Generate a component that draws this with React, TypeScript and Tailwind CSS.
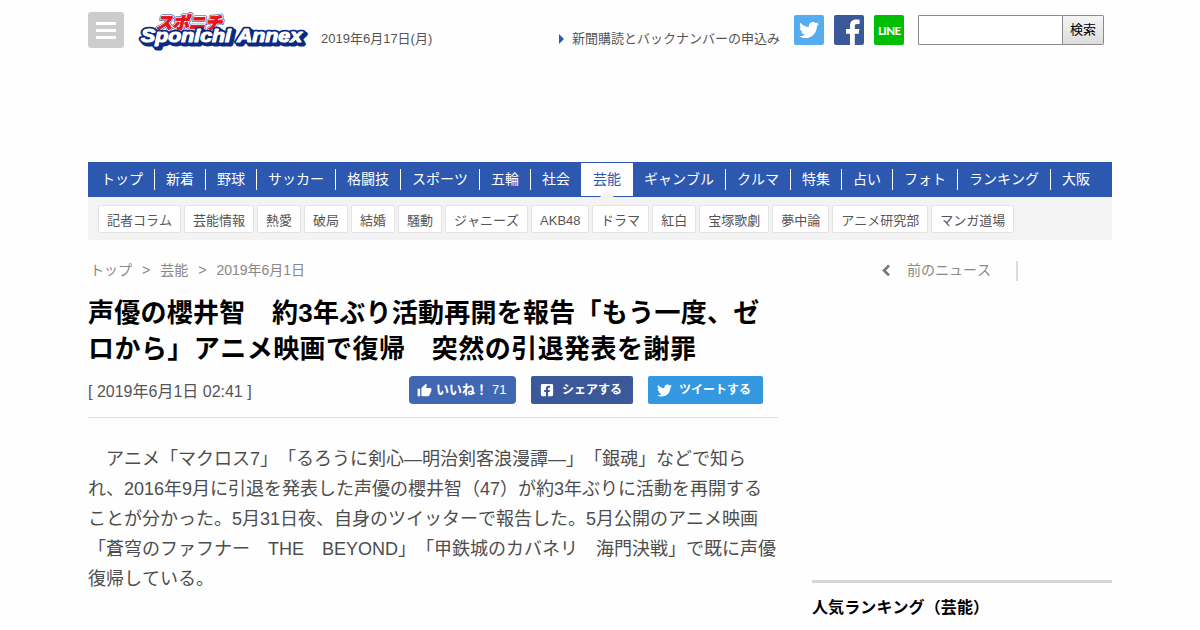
import { FaFacebookSquare, FaTwitter } from 'react-icons/fa';
import { MdThumbUp } from 'react-icons/md';

const navItems = [
  'トップ', '新着', '野球', 'サッカー', '格闘技', 'スポーツ', '五輪', '社会',
  '芸能', 'ギャンブル', 'クルマ', '特集', '占い', 'フォト', 'ランキング', '大阪',
];

const subItems = [
  '記者コラム', '芸能情報', '熱愛', '破局', '結婚', '騒動', 'ジャニーズ',
  'AKB48', 'ドラマ', '紅白', '宝塚歌劇', '夢中論', 'アニメ研究部', 'マンガ道場',
];

const bodyLines = [
  '　アニメ「マクロス7」「るろうに剣心―明治剣客浪漫譚―」「銀魂」などで知ら',
  'れ、2016年9月に引退を発表した声優の櫻井智（47）が約3年ぶりに活動を再開する',
  'ことが分かった。5月31日夜、自身のツイッターで報告した。5月公開のアニメ映画',
  '「蒼穹のファフナー　THE　BEYOND」「甲鉄城のカバネリ　海門決戦」で既に声優',
  '復帰している。',
];

function Logo() {
  return (
    <svg width="172" height="52" viewBox="0 -12 172 52" className="-mt-3 ml-[13px] shrink-0">
      <g strokeLinejoin="round">
        <g transform="skewX(-14)" fontFamily="'Noto Sans CJK JP', sans-serif" fontSize="17" fontWeight="900">
          <text x="23" y="17" textLength="66" lengthAdjust="spacingAndGlyphs" fill="#2c4596" stroke="#2c4596" strokeWidth="3.6">スポニチ</text>
          <text x="23" y="17" textLength="66" lengthAdjust="spacingAndGlyphs" fill="#e6141e" stroke="#fff" strokeWidth="2.4" paintOrder="stroke">スポニチ</text>
          <text x="23" y="17" textLength="66" lengthAdjust="spacingAndGlyphs" fill="#e6141e" stroke="#e6141e" strokeWidth="0.8">スポニチ</text>
        </g>
        <g fontFamily="'Liberation Sans', Arial, sans-serif" fontSize="18" fontWeight="bold" fontStyle="italic">
          <text x="6" y="32" textLength="161" lengthAdjust="spacingAndGlyphs" fill="#0c2a80" stroke="#0c2a80" strokeWidth="5">Sponichi Annex</text>
          <text x="4" y="30" textLength="161" lengthAdjust="spacingAndGlyphs" fill="#fff" stroke="#0c2a80" strokeWidth="4.5" paintOrder="stroke">Sponichi Annex</text>
          <text x="4" y="30" textLength="161" lengthAdjust="spacingAndGlyphs" fill="#fff" stroke="#fff" strokeWidth="1">Sponichi Annex</text>
        </g>
      </g>
    </svg>
  );
}

function Header() {
  return (
    <header className="flex h-[162px] items-start pt-3 text-[13px] text-[#555]">
      <button className="flex size-9 shrink-0 flex-col items-center justify-center gap-1 rounded-[3px] bg-[#ccc]">
        <span className="h-[3px] w-5 bg-white" />
        <span className="h-[3px] w-5 bg-white" />
        <span className="h-[3px] w-5 bg-white" />
      </button>
      <Logo />
      <p className="ml-3 mt-[17px] leading-5">2019年6月17日(月)</p>
      <div className="ml-auto mt-[3px] flex">
        <a className="mr-[14px] mt-[14px] flex h-5 items-center whitespace-nowrap leading-5">
          <span className="mr-2 border-y-[5px] border-l-[5px] border-y-transparent border-l-[#2c5aa8]" />
          新聞購読とバックナンバーの申込み
        </a>
        <a className="mr-2.5 flex size-[30px] items-center justify-center rounded-[2px] bg-[#55acee]">
          <FaTwitter className="size-5 text-white" />
        </a>
        <a className="mr-2.5 block size-[30px] overflow-hidden rounded-[2px] bg-[#3b5998]">
          <svg viewBox="0 0 30 30" fill="#fff">
            <path d="M16 30V18.7h-4v-4.8h4v-3.2c0-4 2.3-6.2 5.9-6.2 1.7 0 3.2.1 3.7.2v4.3h-2.5c-2 0-2.3.9-2.3 2.3v2.6h4.6l-.7 4.8h-3.9V30z" />
          </svg>
        </a>
        <a className="mr-[14px] block size-[30px] rounded-[2px] bg-[#00be00]">
          <svg width="30" height="30" viewBox="0 0 30 30">
            <text x="4" y="19.5" textLength="23" lengthAdjust="spacing" fill="#fff" fontFamily="Lato, 'Liberation Sans', sans-serif" fontSize="11.5" fontWeight="900">LINE</text>
          </svg>
        </a>
        <input className="h-[30px] w-[145px] rounded-l-[1px] border border-[#8a8a8a] bg-white" />
        <button className="mr-2 h-[30px] w-[41px] rounded-r-[2px] border border-l-0 border-[#8a8a8a] bg-gradient-to-b from-[#f5f5f5] to-[#dcdcdc] text-black">
          検索
        </button>
      </div>
    </header>
  );
}

function Nav() {
  return (
    <nav>
      <ul className="flex h-[35px] items-center bg-[#2d58b0] pl-[2px] text-sm text-white">
        {navItems.map((item, i) =>
          item === '芸能' ? (
            <li key={item} className="relative h-[33px] bg-white px-3 leading-[33px] text-[#2d58b0]">
              {item}
              <span className="absolute -bottom-px left-[19px] border-x-[7px] border-b-[6px] border-x-transparent border-b-[#f3f3f3]" />
            </li>
          ) : (
            <li
              key={item}
              className={`h-[21px] whitespace-nowrap px-[11px] leading-[21px] ${i === 7 || i === 15 ? '' : 'border-r border-white'}`}
            >
              {item}
            </li>
          )
        )}
      </ul>
      <ul className="flex h-[43px] gap-[3px] bg-[#f3f3f3] pl-2.5 pt-2 text-[13px] text-[#555]">
        {subItems.map((item) => (
          <li
            key={item}
            className={`h-7 whitespace-nowrap rounded-[2px] border border-[#e4e4e4] bg-white px-2 leading-[29px] ${item === 'AKB48' ? 'w-[58px]' : ''}`}
          >
            {item}
          </li>
        ))}
      </ul>
    </nav>
  );
}

function Article() {
  return (
    <article className="w-[690px]">
      <div className="ml-[2px] mt-5 flex h-5 items-center gap-2.5 text-sm text-[#888]">
        <span>トップ</span>
        <span>&gt;</span>
        <span>芸能</span>
        <span>&gt;</span>
        <span>2019年6月1日</span>
      </div>
      <h1 className="mt-[15px] whitespace-nowrap text-[26px] font-bold leading-9 text-black">
        <span className="tracking-[0.27px]">声優の櫻井智　約3年ぶり活動再開を報告「もう一度、ゼ</span>
        <br />
        <span className="tracking-[0.45px]">ロから」アニメ映画で復帰　突然の引退発表を謝罪</span>
      </h1>
      <div className="flex h-[51px] items-start border-b border-[#ddd] pr-[15px] pt-[9px]">
        <time className="mt-1 text-base leading-6 text-[#555]">[ 2019年6月1日 02:41 ]</time>
        <div className="ml-auto flex gap-[15px] whitespace-nowrap text-[13px] font-bold text-white">
          <a className="flex h-7 w-[107px] items-center rounded bg-[#4267b2] pl-2">
            <MdThumbUp className="mr-1 size-[15px]" />
            いいね！<span className="ml-1 font-normal">71</span>
          </a>
          <a className="flex h-7 w-[102px] items-center rounded-[2px] bg-[#3b5998] pl-[9px] text-xs">
            <FaFacebookSquare className="mr-2 size-[14px]" />
            シェアする
          </a>
          <a className="flex h-7 w-[115px] items-center rounded-[2px] bg-[#3498e1] pl-[9px] text-xs">
            <FaTwitter className="mr-[7px] size-[15px]" />
            ツイートする
          </a>
        </div>
      </div>
      <div className="mt-[26px] whitespace-nowrap text-lg leading-[30px] text-[#4d4d4d]">
        {bodyLines.map((line) => (
          <p key={line}>{line}</p>
        ))}
      </div>
    </article>
  );
}

function Sidebar() {
  return (
    <aside className="w-[300px]">
      <div className="mt-[21px] flex h-5 w-[206px] items-center justify-end border-r-2 border-[#ddd] pr-[25px] text-sm leading-5 text-[#888]">
        <svg width="9" height="12" viewBox="0 0 9 12" fill="none" stroke="#777" strokeWidth="2.6" className="mb-0.5 mr-4">
          <path d="M7 1.500L2 6.500l5 5" />
        </svg>
        <span className="mb-0.5">前のニュース</span>
      </div>
      <h2 className="mt-[299px] border-t-[3px] border-[#d6d6d6] pt-[13px] text-base font-bold leading-6 tracking-[0.1px] text-black">
        人気ランキング（芸能）
      </h2>
    </aside>
  );
}

export default function App() {
  return (
    <div className="h-[630px] w-[1200px] overflow-hidden bg-[#fefefe] font-['Liberation_Sans','Noto_Sans_CJK_JP',sans-serif] [font-kerning:none] [text-spacing-trim:space-all]">
      <div className="mx-auto w-[1024px]">
        <Header />
        <Nav />
        <main className="flex justify-between">
          <Article />
          <Sidebar />
        </main>
      </div>
    </div>
  );
}
